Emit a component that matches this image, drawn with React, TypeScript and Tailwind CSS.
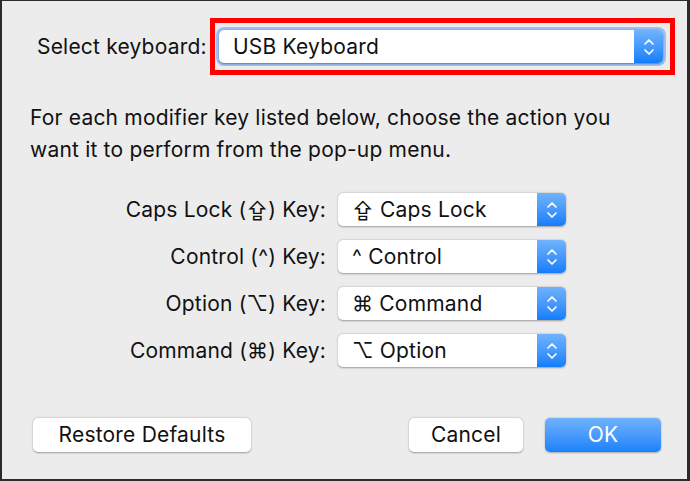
import React from 'react';

const font = { fontFamily: 'Inter, "DejaVu Sans", "Liberation Sans", sans-serif' };

const Stepper: React.FC = () => (
  <div className="flex w-[29px] shrink-0 items-center justify-center self-stretch rounded-r-[5px] bg-linear-to-b from-[#6fb3fb] to-[#0f7dfb]">
    <svg width="12" height="22" viewBox="0 0 12 22" fill="none" stroke="white" strokeWidth="1.7" strokeLinecap="round" strokeLinejoin="round">
      <path d="M2 8 L6 4 L10 8" />
      <path d="M2 14 L6 18 L10 14" />
    </svg>
  </div>
);

const PopUp: React.FC<{ value: string; width: string }> = ({ value, width }) => (
  <div className={`flex h-[33px] ${width} items-center rounded-[5px] bg-white shadow-[0_0.5px_2px_rgba(0,0,0,0.35)]`}>
    <span className="flex-1 truncate pl-[14px] text-[21px] tracking-[0.2px] text-[#111]">{value}</span>
    <Stepper />
  </div>
);

const rows = [
  { label: 'Caps Lock (⇪) Key:', value: '⇪ Caps Lock' },
  { label: 'Control (^) Key:', value: '^ Control' },
  { label: 'Option (⌥) Key:', value: '⌘ Command' },
  { label: 'Command (⌘) Key:', value: '⌥ Option' },
];

const App: React.FC = () => {
  return (
    <div
      className="flex h-[481px] w-[690px] flex-col border-t border-l-2 border-r-[3px] border-b-2 border-[#2b2b2b] bg-[#ececec] text-[#111] tracking-[0.2px]"
      style={font}
    >
      {/* keyboard picker */}
      <div className="flex items-center pt-[17px]">
        <span className="ml-[35px] w-[173px] text-[21px]">Select keyboard:</span>
        <div className="border-[5px] border-[#ff0000] py-[4px] pl-[1px] pr-[4px]">
          <div className="rounded-[8px] bg-[#9cc2f3] p-[3px]">
            <PopUp value="USB Keyboard" width="w-[444px]" />
          </div>
        </div>
      </div>

      <p className="mt-[27px] pl-[28px] text-[21px] leading-[32px]">
        For each modifier key listed below, choose the action you
        <br />
        want it to perform from the pop-up menu.
      </p>

      <div className="mt-[27px] flex flex-col gap-[14px]">
        {rows.map(r => (
          <div key={r.label} className="flex items-center">
            <span className="w-[336px] pr-[12px] text-right text-[21px]">{r.label}</span>
            <PopUp value={r.value} width="w-[228px]" />
          </div>
        ))}
      </div>

      <div className="mt-auto mb-[27px] flex items-center pl-[31px] pr-[26px]">
        <button className="h-[34px] w-[218px] rounded-[5px] bg-white text-[21px] shadow-[0_0.5px_2px_rgba(0,0,0,0.35)]">
          Restore Defaults
        </button>
        <div className="flex-1" />
        <button className="h-[34px] w-[114px] rounded-[5px] bg-white text-[21px] shadow-[0_0.5px_2px_rgba(0,0,0,0.35)]">
          Cancel
        </button>
        <button className="ml-[22px] h-[34px] w-[116px] rounded-[5px] bg-linear-to-b from-[#6fb2fb] to-[#1781fb] text-[21px] text-white shadow-[0_0.5px_2px_rgba(0,0,0,0.3)]">
          OK
        </button>
      </div>
    </div>
  );
};

export default App;
